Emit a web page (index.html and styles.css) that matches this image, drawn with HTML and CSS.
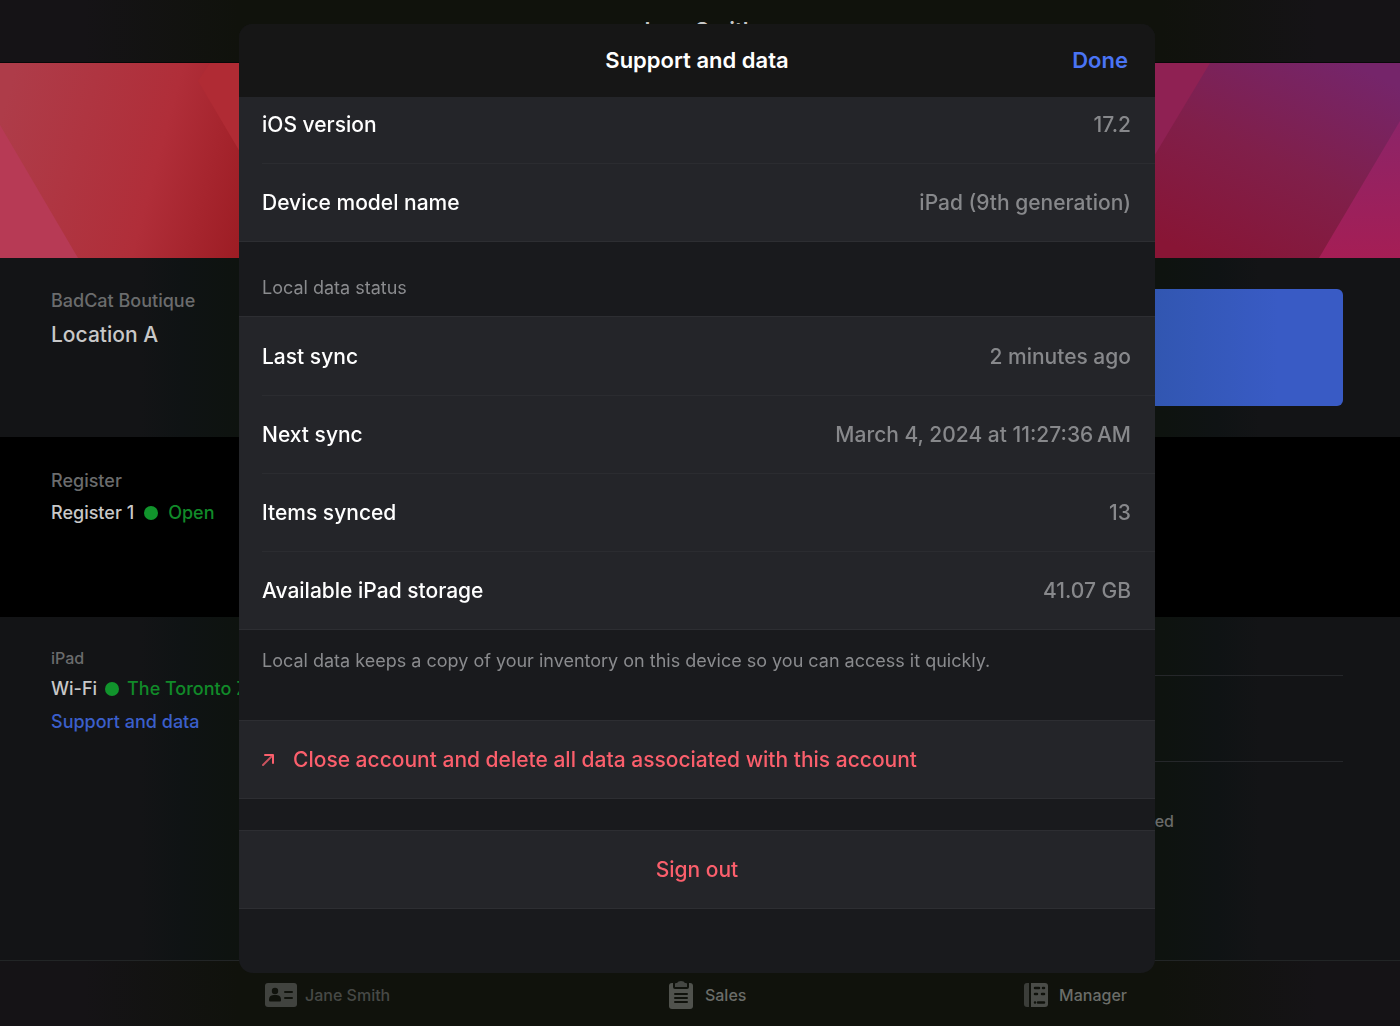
FILE: index.html
```html
<!DOCTYPE html>
<html lang="en">
<head>
    <meta charset="UTF-8">
    <meta name="viewport" content="width=device-width, initial-scale=1.0">
    <title>Support and data</title>
    <link rel="stylesheet" href="styles.css">
</head>
<body>

    <div class="app">
        <header class="topbar">Jane Smith</header>

        <svg class="banner" viewBox="0 0 1400 195" preserveAspectRatio="none" aria-hidden="true">
            <defs>
                <linearGradient id="red" gradientUnits="userSpaceOnUse" x1="0" y1="60" x2="260" y2="130">
                    <stop offset="0" stop-color="#ae3c49" />
                    <stop offset="0.6" stop-color="#b02e39" />
                    <stop offset="1" stop-color="#9c1c23" />
                </linearGradient>
                <linearGradient id="plum" x1="0.8" y1="0" x2="0.2" y2="1">
                    <stop offset="0" stop-color="#75256a" />
                    <stop offset="0.5" stop-color="#801f4a" />
                    <stop offset="1" stop-color="#881535" />
                </linearGradient>
                <linearGradient id="magenta" x1="0" y1="0" x2="0" y2="1">
                    <stop offset="0" stop-color="#8c2468" />
                    <stop offset="1" stop-color="#a51e55" />
                </linearGradient>
            </defs>
            <rect width="240" height="195" fill="url(#red)" />
            <polygon points="0,62 78,195 0,195" fill="#b73a55" />
            <polygon points="210,0 198,18 240,89 240,0" fill="#b02b34" />
            <rect x="240" width="915" height="195" fill="#90182a" />
            <rect x="1150" width="250" height="195" fill="url(#plum)" />
            <polygon points="1150,0 1210,0 1150,100" fill="#8f2153" />
            <polygon points="1400,58 1319,195 1400,195" fill="url(#magenta)" />
        </svg>

        <section class="panel location">
            <div>
                <p class="caption">BadCat Boutique</p>
                <p class="place">Location A</p>
            </div>
            <button class="primary" aria-label="Switch user"></button>
        </section>

        <section class="panel register">
            <p class="caption">Register</p>
            <p class="line">Register 1 <span class="dot"></span> <span class="ok">Open</span></p>
        </section>

        <section class="panel device">
            <div>
                <p class="caption small">iPad</p>
                <p class="line wifi">Wi-Fi <span class="dot"></span> <span class="ok">The Toronto Zoo</span></p>
                <a href="#support" class="support-link">Support and data</a>
            </div>
            <div class="hardware">
                <div class="slot"></div>
                <div class="slot"></div>
                <p class="hardware-note">No hardware connected</p>
            </div>
        </section>

        <nav class="tabs">
            <button class="tab muted">
                <svg width="32" height="26" viewBox="0 0 32 26" aria-hidden="true">
                    <rect x="0" y="1" width="32" height="24" rx="3" fill="#41433f" />
                    <circle cx="10" cy="9" r="3.2" fill="#10120c" />
                    <path d="M4 18c0-4 2-5 6-5s6 1 6 5c0 1-.5 1.600-1.500 1.600h-9C4.500 19.600 4 19 4 18z" fill="#10120c" />
                    <path d="M20 10h7M20 16h7" stroke="#10120c" stroke-width="2" stroke-linecap="round" />
                </svg>
                Jane Smith
            </button>
            <button class="tab">
                <svg width="26" height="28" viewBox="0 0 26 28" aria-hidden="true">
                    <rect x="1" y="2" width="24" height="26" rx="3" fill="#50524d" />
                    <path d="M5 0h16v6q0 2-2 2H7q-2 0-2-2z" fill="#10120c" />
                    <path d="M7 6V3q0-1 1-1h1q1-2 4-2t4 2h1q1 0 1 1v3z" fill="#454743" />
                    <path d="M7 13h12M7 17h12M7 21h12" stroke="#10120c" stroke-width="2" stroke-linecap="round" />
                </svg>
                Sales
            </button>
            <button class="tab">
                <svg width="24" height="24" viewBox="0 0 24 24" aria-hidden="true">
                    <path d="M5 0v24H3q-3 0-3-3V3q0-3 3-3z" fill="#3b3d39" />
                    <path d="M7 0h14q3 0 3 3v18q0 3-3 3H7z" fill="#4a4c48" />
                    <path d="M11 5h4M19 5h1M11 11h2M18 11h2M11 19.500h0M14 19.500h6" stroke="#10120c" stroke-width="2.500" stroke-linecap="round" />
                </svg>
                Manager
            </button>
        </nav>
    </div>

    <div class="overlay">
        <div class="modal" id="support" role="dialog" aria-labelledby="modalTitle">
            <div class="modal-header">
                <h1 id="modalTitle">Support and data</h1>
                <button class="done">Done</button>
            </div>

            <div class="modal-body">
                <dl class="group scrolled">
                    <div class="row"><dt>iOS version</dt><dd>17.2</dd></div>
                    <div class="row"><dt>Device model name</dt><dd>iPad (9th generation)</dd></div>
                </dl>

                <h2>Local data status</h2>
                <dl class="group">
                    <div class="row"><dt>Last sync</dt><dd>2 minutes ago</dd></div>
                    <div class="row"><dt>Next sync</dt><dd>March 4, 2024 at 11:27:36&thinsp;AM</dd></div>
                    <div class="row"><dt>Items synced</dt><dd>13</dd></div>
                    <div class="row"><dt>Available iPad storage</dt><dd>41.07 GB</dd></div>
                </dl>
                <p class="footnote">Local data keeps a copy of your inventory on this device so you can access it quickly.</p>

                <div class="group">
                    <a href="#close-account" class="action">
                        <svg width="12" height="12" viewBox="0 0 12 12" fill="none" aria-hidden="true">
                            <path d="M1 11L10 2" stroke="#c9535e" stroke-width="2" stroke-linecap="round" />
                            <path d="M3 1h8v8" stroke="#fb5f6c" stroke-width="2" stroke-linecap="round" stroke-linejoin="round" />
                        </svg>
                        Close account and delete all data associated with this account
                    </a>
                </div>

                <div class="group sign-out">
                    <button class="action centered">Sign out</button>
                </div>
            </div>
        </div>
    </div>

</body>
</html>
```

FILE: styles.css
```css
* {
    margin: 0;
    padding: 0;
    box-sizing: border-box;
}

body {
    min-height: 100vh;
    background-color: #131416;
    font-family: 'Inter', sans-serif;
    font-size: 18px;
    color: #c8c8c8;
    overflow: hidden;
}

button {
    font: inherit;
    color: inherit;
    background: none;
    border: none;
    cursor: pointer;
}

a {
    text-decoration: none;
}

/* App behind the dialog, darker towards the middle */
.app {
    min-height: 100vh;
    display: flex;
    flex-direction: column;
    background: linear-gradient(90deg, #131416 10%, #0f1314 13%, #0e130f 17%, #0e130f 83%, #0f1314 87%, #131416 90%);
}

.topbar,
.tabs {
    background: linear-gradient(90deg, #151316 6%, #10120c 17%, #10120c 83%, #151316 94%);
}

.topbar {
    height: 63px;
    border-bottom: 1px solid #080808;
    font-size: 22px;
    font-weight: 600;
    line-height: 60px;
    padding-right: 6px;
    text-align: center;
}

.banner {
    display: block;
    width: 100%;
    height: 195px;
}

.panel {
    padding: 31px 57px 31px 51px;
}

.location {
    display: grid;
    grid-template-columns: 1fr 1fr;
    min-height: 179px;
}

.caption {
    color: #6b6c6d;
    font-weight: 500;
    line-height: 24px;
}

.place {
    font-size: 21px;
    line-height: 28px;
    margin-top: 8px;
    font-weight: 500;
}

.primary {
    height: 117px;
    border-radius: 6px;
    background: linear-gradient(90deg, #3156b0 70%, #395bc5 90%);
}

.register {
    min-height: 180px;
    padding-top: 32px;
    background-color: #000;
}

.line {
    display: flex;
    align-items: center;
    gap: 10px;
    line-height: 24px;
    margin-top: 8px;
    font-weight: 500;
}

.dot {
    width: 14px;
    height: 14px;
    border-radius: 50%;
    background-color: #11942c;
}

.ok {
    color: #118a29;
    white-space: nowrap;
}

.device {
    display: grid;
    grid-template-columns: 1fr 1fr;
    flex: 1;
    padding-top: 0;
}

.device .caption {
    margin-top: 29px;
}

.small {
    font-size: 16px;
}

.wifi {
    gap: 8px;
    margin-top: 7px;
}

.support-link {
    display: inline-block;
    color: #3b5fcb;
    font-weight: 500;
    line-height: 24px;
    margin-top: 9px;
}

.slot {
    height: 86px;
    border-bottom: 1px solid #25272a;
}

.slot:first-child {
    height: 59px;
}

.hardware-note {
    font-size: 16px;
    line-height: 20px;
    color: #6a6b6a;
    font-weight: 500;
    text-align: right;
    padding: 49px 169px 0 0;
}

.tabs {
    display: flex;
    justify-content: space-between;
    height: 66px;
    padding: 2px 273px 0 265px;
    border-top: 1px solid #222526;
}

.tab {
    display: flex;
    align-items: center;
    gap: 11px;
    font-size: 16px;
    font-weight: 500;
    color: #6b6d69;
}

.muted {
    gap: 8px;
    color: #474946;
}

/* Dialog */
.overlay {
    position: fixed;
    inset: 0;
    display: flex;
    padding: 24px 245px 53px 239px;
}

.modal {
    flex: 1;
    display: flex;
    flex-direction: column;
    overflow: hidden;
    border-radius: 14px;
    background-color: #191a1d;
}

.modal-header {
    display: grid;
    grid-template-columns: 1fr auto 1fr;
    align-items: center;
    height: 73px;
    flex-shrink: 0;
    padding: 0 27px 2px;
    background-color: #161616;
    font-size: 22px;
}

.modal-header h1 {
    grid-column: 2;
    font-size: 22px;
    font-weight: 600;
    color: #fff;
}

.done {
    justify-self: end;
    font-weight: 600;
    color: #4a74f5;
}

.modal-body {
    flex: 1;
    overflow: hidden;
}

.group {
    background-color: #242529;
    border-top: 1px solid #2d2e32;
    border-bottom: 1px solid #2d2e32;
    padding-left: 23px;
    font-size: 21px;
    font-weight: 500;
}

.scrolled {
    margin-top: -13px;
}

.row {
    display: flex;
    justify-content: space-between;
    align-items: center;
    height: 78px;
    padding-right: 24px;
}

.row + .row {
    border-top: 1px solid #2b2c30;
}

.row dt {
    color: #fff;
}

.row dd {
    color: #87888b;
}

.modal h2 {
    height: 74px;
    padding: 34px 23px 0;
    font-size: 18px;
    font-weight: 400;
    line-height: 24px;
    color: #8a8b8e;
}

.footnote {
    height: 90px;
    padding: 19px 23px 0;
    line-height: 24px;
    color: #8a8b8e;
}

.action {
    display: flex;
    align-items: center;
    gap: 19px;
    width: 100%;
    height: 77px;
    color: #fb5f6c;
}

.centered {
    justify-content: center;
}

.sign-out {
    margin-top: 31px;
    padding-left: 0;
}
```
